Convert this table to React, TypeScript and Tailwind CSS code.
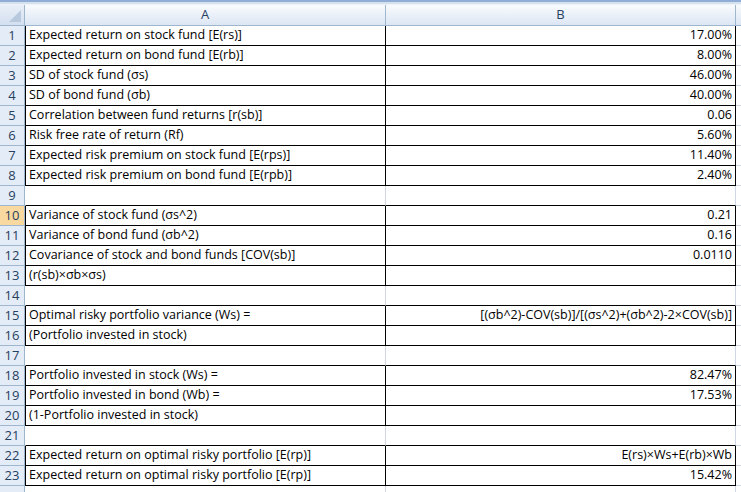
import React from "react";

type Row = { a: string; b: string; bordered: boolean };

const rows: Row[] = [
  { a: "Expected return on stock fund [E(rs)]", b: "17.00%", bordered: true },
  { a: "Expected return on bond fund [E(rb)]", b: "8.00%", bordered: true },
  { a: "SD of stock fund (σs)", b: "46.00%", bordered: true },
  { a: "SD of bond fund (σb)", b: "40.00%", bordered: true },
  { a: "Correlation between fund returns [r(sb)]", b: "0.06", bordered: true },
  { a: "Risk free rate of return (Rf)", b: "5.60%", bordered: true },
  { a: "Expected risk premium on stock fund [E(rps)]", b: "11.40%", bordered: true },
  { a: "Expected risk premium on bond fund [E(rpb)]", b: "2.40%", bordered: true },
  { a: "", b: "", bordered: false },
  { a: "Variance of stock fund (σs^2)", b: "0.21", bordered: true },
  { a: "Variance of bond fund (σb^2)", b: "0.16", bordered: true },
  { a: "Covariance of stock and bond funds [COV(sb)]", b: "0.0110", bordered: true },
  { a: "(r(sb)×σb×σs)", b: "", bordered: true },
  { a: "", b: "", bordered: false },
  { a: "Optimal risky portfolio variance (Ws) =", b: "[(σb^2)-COV(sb)]/[(σs^2)+(σb^2)-2×COV(sb)]", bordered: true },
  { a: "(Portfolio invested in stock)", b: "", bordered: true },
  { a: "", b: "", bordered: false },
  { a: "Portfolio invested in stock (Ws) =", b: "82.47%", bordered: true },
  { a: "Portfolio invested in bond (Wb) =", b: "17.53%", bordered: true },
  { a: "(1-Portfolio invested in stock)", b: "", bordered: true },
  { a: "", b: "", bordered: false },
  { a: "Expected return on optimal risky portfolio [E(rp)]", b: "E(rs)×Ws+E(rb)×Wb", bordered: true },
  { a: "Expected return on optimal risky portfolio [E(rp)]", b: "15.42%", bordered: true },
  { a: "", b: "", bordered: false },
];

export default function App() {
  return (
    <div
      className="w-[741px] h-[492px] overflow-hidden bg-white text-black"
      style={{ fontFamily: '"Open Sans", "Noto Sans", sans-serif' }}
    >
      {/* top strip */}
      <div className="h-[5px] bg-[#d5e1ef] border-t-2 border-[#8fadd6] border-b border-b-[#eef3fa]" />
      {/* column headers */}
      <div className="flex h-[21px] border-b border-[#9eb6ce]">
        <div className="w-[25px] shrink-0 border-r border-[#9eb6ce] bg-gradient-to-b from-[#e9eff7] to-[#d3dff0] relative">
          <div className="absolute right-[3px] bottom-[3px] w-0 h-0 border-l-[12px] border-l-transparent border-b-[12px] border-b-[#b8c9de]" />
        </div>
        <div className="w-[361px] shrink-0 border-r border-[#9eb6ce] bg-gradient-to-b from-[#f9fbfd] to-[#dce6f4] flex items-center justify-center text-[13px] text-[#27415f]">
          A
        </div>
        <div className="w-[350px] shrink-0 border-r border-[#9eb6ce] bg-gradient-to-b from-[#f9fbfd] to-[#dce6f4] flex items-center justify-center text-[13px] text-[#27415f]">
          B
        </div>
        <div className="flex-1 bg-gradient-to-b from-[#f9fbfd] to-[#dce6f4]" />
      </div>
      {rows.map((r, i) => {
        const next = rows[i + 1];
        const bottomBlack = r.bordered || (next && next.bordered);
        const active = i === 9;
        const last = i === rows.length - 1;
        return (
          <div key={i} className="flex h-[20px]">
            <div
              className={
                "w-[25px] shrink-0 border-r border-b border-[#9eb6ce] flex items-center justify-center text-[13px] " +
                (active ? "bg-[#f9d99f] text-[#27415f]" : "bg-[#e4ecf7] text-[#27415f]")
              }
            >
              {last ? "" : i + 1}
            </div>
            <div
              className={
                "w-[361px] shrink-0 border-l border-r border-b flex items-center pl-[3px] text-[12.5px] whitespace-nowrap overflow-hidden " +
                (r.bordered ? "border-l-black border-r-black " : "border-l-white border-r-[#d0d7e5] ") +
                (bottomBlack ? "border-b-black" : "border-b-[#d0d7e5]")
              }
            >
              {r.a}
            </div>
            <div
              className={
                "w-[350px] shrink-0 border-r border-b flex items-center justify-end pr-[3px] text-[12.5px] whitespace-nowrap " +
                (r.bordered ? "border-r-black " : "border-r-[#d0d7e5] ") +
                (bottomBlack ? "border-b-black" : "border-b-[#d0d7e5]")
              }
            >
              {r.b}
            </div>
            <div className="flex-1 border-b border-[#d0d7e5]" />
          </div>
        );
      })}
    </div>
  );
}
